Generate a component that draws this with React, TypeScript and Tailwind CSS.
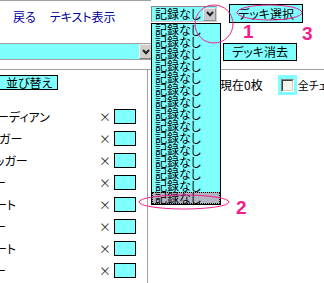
import React from "react";

const rows = [
  { t: "ーディアン", off: "-ml-[3px]" },
  { t: "ガー", off: "-ml-[1px]" },
  { t: "ッガー", off: "-ml-[5px]" },
  { t: "ー", off: "-ml-[6px]" },
  { t: "ート", off: "-ml-[5px]" },
  { t: "ー", off: "-ml-[6px]" },
  { t: "ート", off: "-ml-[5px]" },
  { t: "ー", off: "-ml-[6px]" },
];

function Chevron() {
  return (
    <svg width="8" height="6" viewBox="0 0 8 6">
      <path d="M1 1 L4 4.2 L7 1" fill="none" stroke="#202020" strokeWidth="2" />
    </svg>
  );
}

export default function App() {
  return (
    <div className="relative w-[324px] h-[283px] overflow-hidden bg-white text-black text-[12px] leading-none font-['Noto_Sans_CJK_JP','Noto_Sans',sans-serif] [font-feature-settings:'palt']">
      {/* top row */}
      <div className="flex h-[43px]">
        <div className="w-[151px] shrink-0 border-t border-[#a0a0a0]">
          <div className="flex gap-[14px] pl-[13px] pt-[10px] text-[#00009c] whitespace-nowrap">
            <span>戻る</span>
            <span>テキスト表示</span>
          </div>
        </div>
        <div className="flex items-start shrink-0">
          <div className="mt-[6px] w-[66px] h-[16px] border border-[#8a8a8a] border-b-[#d4d0c8] border-r-[#d4d0c8] bg-[#80ffff] flex items-center">
            <span className="flex-1 pl-[3px] whitespace-nowrap">記録なし</span>
            <span className="shrink-0 w-[13px] h-[13px] bg-[#c8c8d0] border border-[#e8e8e8] border-b-[#909090] border-r-[#909090] flex items-center justify-center">
              <Chevron />
            </span>
          </div>
          <button className="ml-[12px] mt-[4px] w-[74px] h-[19px] border border-black bg-[#80ffff] flex items-center justify-center whitespace-nowrap">
            デッキ選択
          </button>
        </div>
      </div>

      {/* second row */}
      <div className="flex h-[26px] items-start">
        <div className="shrink-0 w-[153px] h-[17px] border-y border-[#a0a0a0] bg-[#80ffff] flex justify-end items-center">
          <span className="w-[14px] h-[15px] bg-[#d4d0c8] border border-[#f0f0f0] border-b-[#808080] border-r-[#808080] flex items-center justify-center">
            <Chevron />
          </span>
        </div>
        <button className="shrink-0 ml-[70px] w-[74px] h-[18px] border border-black bg-[#80ffff] flex items-center justify-center whitespace-nowrap">
          デッキ消去
        </button>
      </div>

      {/* main */}
      <div className="flex border-t border-[#a0a0a0] h-[214px]">
        <div className="w-[148px] shrink-0 border-r border-[#a0a0a0]">
          <button className="-ml-[1px] mt-[5px] w-[59px] h-[15px] border border-black bg-[#80ffff] flex items-center pl-[6px] whitespace-nowrap">
            並び替え
          </button>
          <div className="mt-[16px] flex flex-col">
            {rows.map((r, i) => (
              <div key={i} className="flex h-[22px] items-start">
                <div className="w-[99px] h-[22px] overflow-hidden flex items-center whitespace-nowrap">
                  <span className={r.off}>{r.t}</span>
                </div>
                <span className="w-[15px] h-[22px] flex items-center text-[#303030]">×</span>
                <span className="mt-[3px] w-[22px] h-[15px] border border-black bg-[#80ffff]" />
              </div>
            ))}
          </div>
        </div>
        <div className="flex-1 min-w-0 overflow-hidden pl-[72px] pt-[5px]">
          <div className="flex items-center h-[20px] whitespace-nowrap">
            <span className="shrink-0">現在0枚</span>
            <span className="shrink-0 ml-[15px] w-[19px] h-[20px] bg-[#80ffff] flex items-center justify-center">
              <span className="w-[13px] h-[13px] border border-[#808080] border-b-white border-r-white">
                <span className="block w-full h-full border border-[#404040] border-b-[#d4d0c8] border-r-[#d4d0c8] bg-[#f4f4f0]" />
              </span>
            </span>
            <span className="shrink-0 ml-[1px] text-[11px]">全チェック</span>
          </div>
        </div>
      </div>

      {/* open dropdown list */}
      <div className="absolute left-[151px] top-[23px] w-[70px] border border-black bg-[#80ffff]">
        {Array.from({ length: 14 }).map((_, i) => (
          <div key={i} className="h-[12px] leading-[12px] pl-[3px] whitespace-nowrap">記録なし</div>
        ))}
        <div className="h-[12px] leading-[10px] pl-[2px] bg-[#b2b4c2] border border-dotted border-black whitespace-nowrap">記録なし</div>
      </div>

      {/* annotations */}
      <svg className="absolute left-0 top-0 pointer-events-none" width="324" height="283">
        <ellipse cx="214" cy="24" rx="19" ry="19" fill="none" stroke="#f0208a" strokeWidth="1" />
        <ellipse cx="269.5" cy="12.5" rx="32.5" ry="7.5" fill="none" stroke="#f0208a" strokeWidth="1" />
        <ellipse cx="184" cy="202" rx="45" ry="7" fill="none" stroke="#f0208a" strokeWidth="1" />
      </svg>
      <span className="absolute left-[243px] top-[22px] text-[19px] font-bold text-[#f0208a] font-['Liberation_Sans',sans-serif]">1</span>
      <span className="absolute left-[236px] top-[198px] text-[19px] font-bold text-[#f0208a] font-['Liberation_Sans',sans-serif]">2</span>
      <span className="absolute left-[302px] top-[24px] text-[19px] font-bold text-[#f0208a] font-['Liberation_Sans',sans-serif]">3</span>
    </div>
  );
}
